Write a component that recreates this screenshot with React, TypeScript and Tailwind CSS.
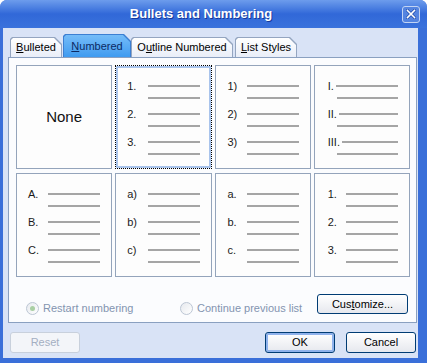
import React from "react";

type CellData = {
  labels?: string[];
  roman?: boolean;
  selected?: boolean;
  pad: string;
};

const cells: CellData[] = [
  { pad: "pl-[11px]" },
  { labels: ["1.", "2.", "3."], selected: true, pad: "pl-[11px]" },
  { labels: ["1)", "2)", "3)"], pad: "pl-[12px]" },
  { labels: ["I.", "II.", "III."], roman: true, pad: "pl-[13px]" },
  { labels: ["A.", "B.", "C."], pad: "pl-[11px]" },
  { labels: ["a)", "b)", "c)"], pad: "pl-[11px]" },
  { labels: ["a.", "b.", "c."], pad: "pl-[12px]" },
  { labels: ["1.", "2.", "3."], pad: "pl-[13px]" },
];

const tabs = [
  { pre: "", u: "B", post: "ulleted", w: "w-[52px] ml-[7px]" },
  { pre: "", u: "N", post: "umbered", w: "w-[68px] ml-[1px]", active: true },
  { pre: "O", u: "u", post: "tline Numbered", w: "w-[102px]" },
  { pre: "", u: "L", post: "ist Styles", w: "w-[62px] ml-[2px]" },
];

function Line({ className = "" }: { className?: string }) {
  return <div className={`h-[2px] bg-[#a5a5a5] ${className}`} />;
}

function Cell({ cell }: { cell: CellData }) {
  const frame = cell.selected
    ? "border border-dotted border-black shadow-[inset_0_0_0_2px_#a9c4ec]"
    : "border border-[#94a4bb]";

  if (!cell.labels) {
    return (
      <div className={`h-[104px] bg-[#fdfdfd] ${frame} flex items-center justify-center text-[15px] text-[#111]`}>
        None
      </div>
    );
  }

  return (
    <div className={`h-[104px] bg-[#fdfdfd] ${frame} ${cell.pad} pr-[11px] pt-[13px] flex flex-col gap-[8px] text-[11px] text-[#1a1a1a]`}>
      {cell.labels.map((l) =>
        cell.roman ? (
          <div key={l} className="flex flex-col">
            <div className="flex items-center h-[14px]">
              <span className="leading-[14px]">{l}</span>
              <Line className="ml-[2px] flex-1" />
            </div>
            <Line className="mt-[4px] ml-auto w-[61px]" />
          </div>
        ) : (
          <div key={l} className="flex flex-col">
            <div className="flex items-center justify-between h-[14px]">
              <span className="leading-[14px]">{l}</span>
              <Line className="w-[52px]" />
            </div>
            <Line className="mt-[4px] ml-auto w-[52px]" />
          </div>
        )
      )}
    </div>
  );
}

function Radio({ checked, label, className = "" }: { checked?: boolean; label: string; className?: string }) {
  return (
    <div className={`flex items-center mt-[6px] ${className}`}>
      <div className="w-[13px] h-[13px] rounded-full border border-[#bcc6d4] bg-linear-to-br from-[#e6e9ee] to-white flex items-center justify-center">
        {checked && <div className="w-[5px] h-[5px] rounded-full bg-[#a9cfa4]" />}
      </div>
      <span className="ml-[4px] text-[11px] text-[#8394b0]">{label}</span>
    </div>
  );
}

function Button({ children, variant }: { children: React.ReactNode; variant?: "default" | "disabled" }) {
  const look =
    variant === "disabled"
      ? "border-[#c8d0dc] bg-[#f3f5f9] text-[#a3afc2]"
      : variant === "default"
        ? "border-[#003c74] bg-linear-to-b from-white to-[#e6e8ee] text-black shadow-[inset_0_0_0_2px_#8fb2ec]"
        : "border-[#003c74] bg-linear-to-b from-white to-[#e6e8ee] text-black";
  return (
    <div className={`w-[70px] h-[21px] rounded-[3px] border ${look} flex items-center justify-center text-[11px]`}>
      {children}
    </div>
  );
}

export default function App() {
  return (
    <div className="w-[427px] h-[363px] overflow-hidden rounded-t-[7px] bg-[#3a6fd9] flex flex-col font-['Liberation_Sans',Arial,sans-serif]">
      {/* title bar */}
      <div className="h-[28px] flex items-center bg-linear-to-b from-[#6d9cec] via-[#3168d8] to-[#3a72dc]">
        <div className="flex-1 flex justify-center text-[13px] font-bold text-white [text-shadow:1px_1px_0_#16399a]">
          Bullets and Numbering
        </div>
        <div className="mr-[7px] w-[18px] h-[17px] rounded-[3px] border border-[#c2d4f4] bg-[#5484e0] flex items-center justify-center">
          <svg width="10" height="10" viewBox="0 0 10 10">
            <path d="M1.5 1.5 L8.5 8.5 M8.5 1.5 L1.5 8.5" stroke="#1e4aa8" strokeWidth="3" strokeLinecap="square" />
            <path d="M1.5 1.5 L8.5 8.5 M8.5 1.5 L1.5 8.5" stroke="#ffffff" strokeWidth="1.6" strokeLinecap="square" />
          </svg>
        </div>
      </div>

      {/* body */}
      <div className="h-[330px] ml-[3px] mr-[9px] bg-[#d9e3f6] flex flex-col pt-[6px]">
        {/* tabs */}
        <div className="h-[23px] flex items-end">
          {tabs.map((t) => (
            <div
              key={t.post}
              className={`${t.w} ${t.active ? "h-[23px] bg-[#3c7fd2]" : "h-[20px] bg-[#94a5c0]"} px-[1px] pt-[1px] [clip-path:polygon(0_2px,2px_0,calc(100%-7px)_0,100%_7px,100%_100%,0_100%)]`}
            >
              <div
                className={`h-full flex items-center justify-center text-[11px] [clip-path:polygon(0_2px,2px_0,calc(100%-7px)_0,100%_7px,100%_100%,0_100%)] ${
                  t.active ? "bg-linear-to-b from-[#74bcf8] to-[#3e9bf0] text-[#0d2a63]" : "bg-linear-to-b from-white to-[#e9eef8] text-black"
                }`}
              >
                <span>
                  {t.pre}
                  <span className="underline">{t.u}</span>
                  {t.post}
                </span>
              </div>
            </div>
          ))}
        </div>

        {/* tab panel */}
        <div className="ml-[5px] mr-[1px] h-[266px] border border-[#8aa0c0] bg-[#fbfcfe] pl-[7px] pr-[6px] pt-[7px]">
          <div className="grid grid-cols-4 gap-x-[3px] gap-y-[4px]">
            {cells.map((c, i) => (
              <Cell key={i} cell={c} />
            ))}
          </div>
          <div className="mt-[17px] flex items-start">
            <Radio checked label="Restart numbering" className="ml-[10px] w-[154px]" />
            <Radio label="Continue previous list" />
            <div className="ml-auto mr-[2px] w-[91px] h-[20px] rounded-[3px] border border-[#003c74] bg-linear-to-b from-white to-[#e6e8ee] flex items-center justify-center text-[11px]">
              <span>
                Cus<span className="underline">t</span>omize...
              </span>
            </div>
          </div>
        </div>

        {/* dialog buttons */}
        <div className="mt-[9px] flex items-center pl-[7px] pr-[2px]">
          <Button variant="disabled">Reset</Button>
          <div className="ml-auto">
            <Button variant="default">OK</Button>
          </div>
          <div className="ml-[11px]">
            <Button>Cancel</Button>
          </div>
        </div>
      </div>
    </div>
  );
}
